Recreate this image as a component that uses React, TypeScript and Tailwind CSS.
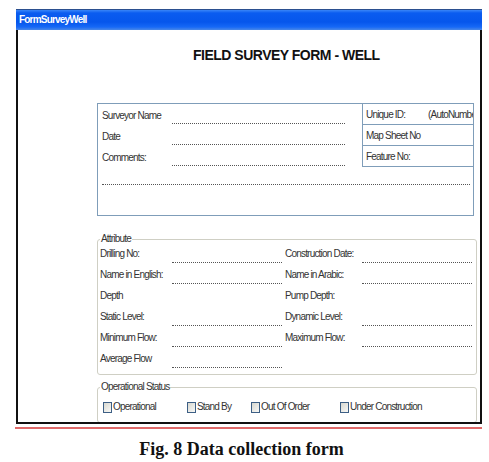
import React from "react";

// Attribute rows: [left label, left has entry line, right label, right has entry line]
const ATTRIBUTE_ROWS: [string, boolean, string, boolean][] = [
  ["Drilling No:", true, "Construction Date:", true],
  ["Name in English:", true, "Name in Arabic:", true],
  ["Depth", false, "Pump Depth:", false],
  ["Static Level:", true, "Dynamic Level:", true],
  ["Minimum Flow:", true, "Maximum Flow:", true],
  ["Average Flow", true, "", false],
];

const STATUS_OPTIONS = [
  { label: "Operational", width: "w-[84px]" },
  { label: "Stand By", width: "w-[64px]" },
  { label: "Out Of Order", width: "w-[89px]" },
  { label: "Under Construction", width: "" },
];

function EntryLine({ show }: { show: boolean }) {
  return <div className={"w-[110px] h-[18px] " + (show ? "border-b border-dotted border-[#555]" : "")} />;
}

function Checkbox() {
  return (
    <span className="inline-block w-[9px] h-[11px] border border-[#3d5f85] bg-[linear-gradient(135deg,#d8d8d0,#f8f8f6)]" />
  );
}

export default function App() {
  return (
    <div className="w-[489px] h-[462px] bg-white overflow-hidden font-['Liberation_Sans',Arial,sans-serif] text-[10px] tracking-[-0.8px] text-[#333]">
      <div className="pt-[9px] pl-[16px]">
        {/* Window */}
        <div className="w-[466px]">
          <div className="h-[21px] flex items-center pl-[3px] border-t border-[#2b4f8f] bg-[linear-gradient(to_bottom,#3a86f8_0%,#0a5cf0_15%,#0656ec_60%,#1668f6_85%,#4a88e8_100%)]">
            <span className="text-white font-bold text-[10px] leading-none">FormSurveyWell</span>
          </div>
          <div className="h-[394px] border-l-2 border-r-2 border-b-2 border-[#111] overflow-hidden">
            <div className="mt-[17px] pl-[175px] text-[14px] leading-[17px] font-bold tracking-[-0.5px] text-[#111]">
              FIELD SURVEY FORM - WELL
            </div>

            {/* General info */}
            <div className="mt-[39px] ml-[79px] w-[377px] h-[113px] border border-[#7f9db9]">
              <div className="grid grid-cols-[1fr_111px]">
                <div className="pl-[4px] pt-[2px]">
                  {["Surveyor Name", "Date", "Comments:"].map((label) => (
                    <div key={label} className="flex h-[21px]">
                      <div className="w-[70px] pt-[4px] leading-[12px]">{label}</div>
                      <div className="w-[173px] h-[18px] border-b border-dotted border-[#555]" />
                    </div>
                  ))}
                </div>
                <div className="border-l border-[#7f9db9] self-start">
                  <div className="h-[21px] flex items-center pl-[3px] border-b border-[#7f9db9] whitespace-nowrap overflow-hidden">
                    <span className="shrink-0 w-[62px]">Unique ID:</span>
                    <span>(AutoNumber)</span>
                  </div>
                  <div className="h-[21px] flex items-center pl-[3px] border-b border-[#7f9db9]">Map Sheet No</div>
                  <div className="h-[21px] flex items-center pl-[3px] border-b border-[#7f9db9]">Feature No:</div>
                </div>
              </div>
              <div className="ml-[4px] w-[368px] h-[16px] border-b border-dotted border-[#555]" />
            </div>

            {/* Attribute */}
            <fieldset className="mt-[17px] ml-[79px] w-[380px] border border-[#cfcfc4] rounded-[3px] pl-[2px] pb-[3px]">
              <legend className="px-[1px] leading-[12px]">Attribute</legend>
              <div className="grid grid-cols-[72px_113px_77px_110px]">
                {ATTRIBUTE_ROWS.map(([l, lLine, r, rLine]) => (
                  <React.Fragment key={l}>
                    <div className="h-[21px] pt-[3px] leading-[12px] whitespace-nowrap">{l}</div>
                    <EntryLine show={lLine} />
                    <div className="h-[21px] pt-[3px] leading-[12px] whitespace-nowrap">{r}</div>
                    <EntryLine show={rLine} />
                  </React.Fragment>
                ))}
              </div>
            </fieldset>

            {/* Operational status */}
            <fieldset className="mt-[6px] ml-[79px] w-[380px] h-[42px] border border-[#cfcfc4] rounded-[3px] pl-[2px]">
              <legend className="px-[1px] leading-[12px]">Operational Status</legend>
              <div className="flex items-center mt-[7px] ml-[3px] h-[14px]">
                {STATUS_OPTIONS.map((o) => (
                  <div key={o.label} className={"flex items-center gap-[1px] " + o.width}>
                    <Checkbox />
                    <span className="leading-[12px]">{o.label}</span>
                  </div>
                ))}
              </div>
            </fieldset>
          </div>
        </div>
      </div>

      <div className="mt-[3px] ml-[15px] w-[467px] h-[2px] bg-[#e06a6a]" />
      <div className="mt-[10px] pr-[6px] text-center font-['Liberation_Serif','Times_New_Roman',serif] font-bold text-[18px] leading-[20px] tracking-normal text-[#111]">
        Fig. 8 Data collection form
      </div>
    </div>
  );
}
